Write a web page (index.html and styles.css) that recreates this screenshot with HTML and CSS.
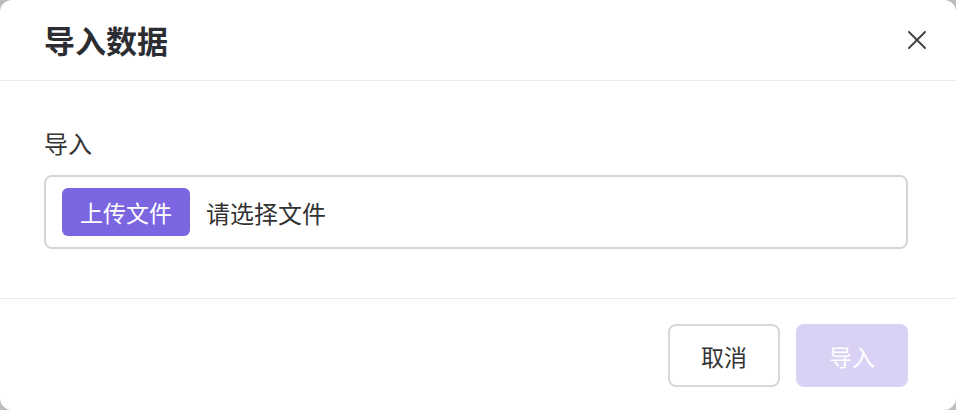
FILE: index.html
```html
<!DOCTYPE html>
<html lang="zh-CN">
<head>
<meta charset="utf-8">
<title>导入数据</title>
<link rel="stylesheet" href="styles.css">
</head>
<body>
<div class="modal">
  <header class="modal-header">
    <h1 class="modal-title">导入数据</h1>
    <button class="close-btn" aria-label="关闭">
      <svg width="20" height="20" viewBox="0 0 20 20"><path d="M2 2 L18 18 M18 2 L2 18" stroke="#444" stroke-width="2" stroke-linecap="round" fill="none"/></svg>
    </button>
  </header>
  <section class="modal-body">
    <label class="field-label">导入</label>
    <div class="file-input">
      <span class="upload-btn">上传文件</span>
      <span class="placeholder">请选择文件</span>
    </div>
  </section>
  <footer class="modal-footer">
    <button class="btn btn-cancel">取消</button>
    <button class="btn btn-primary" disabled>导入</button>
  </footer>
</div>
</body>
</html>
```

FILE: styles.css
```css
* { box-sizing: border-box; }
html, body { margin: 0; padding: 0; }
body {
  width: 956px;
  height: 410px;
  background: #bdbdbd;
  font-family: "Noto Sans CJK SC", "Noto Sans", sans-serif;
  color: #333;
  overflow: hidden;
}
.modal {
  width: 956px;
  height: 410px;
  background: #fff;
  border-radius: 12px;
  display: flex;
  flex-direction: column;
}
.modal-header {
  height: 81px;
  border-bottom: 1px solid #ececec;
  display: flex;
  align-items: center;
  justify-content: space-between;
  padding: 0 29px 0 44px;
}
.modal-title {
  margin: 0;
  font-size: 31px;
  font-weight: 700;
  color: #2b2d33;
  line-height: 40px;
}
.close-btn {
  border: 0;
  background: none;
  padding: 0;
  width: 20px;
  height: 20px;
  display: flex;
  cursor: pointer;
}
.modal-body {
  padding: 46px 48px 0 44px;
  height: 218px;
  border-bottom: 1px solid #ececec;
  display: flex;
  flex-direction: column;
}
.field-label {
  font-size: 24px;
  line-height: 32px;
  color: #333;
  padding-left: 0;
}
.file-input {
  margin-top: 16px;
  height: 74px;
  border: 2px solid #d6d6da;
  border-radius: 8px;
  display: flex;
  align-items: center;
  padding: 0 16px;
  gap: 16px;
}
.upload-btn {
  width: 128px;
  height: 48px;
  background: #7b65e0;
  color: #fff;
  border-radius: 6px;
  font-size: 23px;
  display: flex;
  align-items: center;
  justify-content: center;
}
.placeholder {
  font-size: 24px;
  color: #333;
}
.modal-footer {
  flex: 1;
  display: flex;
  justify-content: flex-end;
  align-items: flex-start;
  padding: 25px 48px 0 0;
  gap: 16px;
}
.btn {
  width: 112px;
  height: 63px;
  border-radius: 8px;
  font-family: inherit;
  font-size: 23px;
  display: flex;
  align-items: center;
  justify-content: center;
  padding: 0;
}
.btn-cancel {
  background: #fff;
  border: 2px solid #d8d8d8;
  color: #333;
}
.btn-primary {
  background: #d9d2f4;
  border: 0;
  color: #fff;
}
```
